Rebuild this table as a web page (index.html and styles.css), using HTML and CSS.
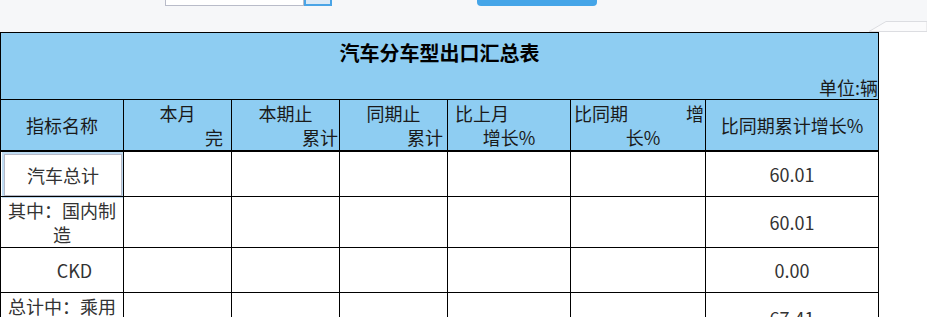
FILE: index.html
```html
<!DOCTYPE html>
<html lang="zh-CN">
<head>
    <meta charset="UTF-8">
    <meta name="viewport" content="width=device-width, initial-scale=1.0">
    <title>汽车分车型出口汇总表</title>
    <link rel="stylesheet" href="styles.css">
</head>
<body>
    <div class="toolbar">
        <div class="search">
            <span class="search-input"></span>
            <span class="search-btn"></span>
        </div>
        <span class="query-btn"></span>
        <svg class="tab-edge" width="58" height="12" viewBox="0 0 58 12">
            <path d="M0 11.5 L17 1.5 L58 1.5 L58 11.5 Z" fill="#fbfbfc" stroke="#dcdde1" stroke-width="1"/>
        </svg>
    </div>

    <table class="report">
        <colgroup>
            <col style="width:123px">
            <col style="width:108px">
            <col style="width:108px">
            <col style="width:108px">
            <col style="width:123px">
            <col style="width:135px">
            <col style="width:173px">
        </colgroup>
        <thead>
            <tr>
                <th colspan="7" class="title-cell">
                    <div class="title">汽车分车型出口汇总表</div>
                    <div class="unit">单位:辆</div>
                </th>
            </tr>
            <tr class="head-row">
                <th>指标名称</th>
                <th><span class="ln">本月</span><span class="ln right pr8">完</span></th>
                <th><span class="ln">本期止</span><span class="ln right">累计</span></th>
                <th><span class="ln">同期止</span><span class="ln right pr4">累计</span></th>
                <th><span class="ln left pl7">比上月</span><span class="ln">增长%</span></th>
                <th><span class="ln split"><span>比同期</span><span>增</span></span><span class="ln pl10">长%</span></th>
                <th>比同期累计增长%</th>
            </tr>
        </thead>
        <tbody>
            <tr>
                <td class="name"><div class="cell-edit">汽车总计</div></td>
                <td></td><td></td><td></td><td></td><td></td>
                <td>60.01</td>
            </tr>
            <tr>
                <td class="name">其中：国内制造</td>
                <td></td><td></td><td></td><td></td><td></td>
                <td>60.01</td>
            </tr>
            <tr>
                <td class="name indent">CKD</td>
                <td></td><td></td><td></td><td></td><td></td>
                <td>0.00</td>
            </tr>
            <tr>
                <td class="name">总计中：乘用车</td>
                <td></td><td></td><td></td><td></td><td></td>
                <td>67.41</td>
            </tr>
            <tr>
                <td class="name">其中：国内制造</td>
                <td></td><td></td><td></td><td></td><td></td>
                <td>67.41</td>
            </tr>
        </tbody>
    </table>
</body>
</html>
```

FILE: styles.css
```css
body {
    margin: 0;
    background-color: #ffffff;
    font-family: "Noto Sans CJK SC", "Noto Sans", sans-serif;
    color: #333;
}

/* query bar, scrolled partly out of view */
.toolbar {
    height: 32px;
    background-color: #f6f7f9;
    display: flex;
    align-items: flex-start;
    overflow: hidden;
}

.search {
    display: flex;
    margin-left: 165px;
    margin-top: -20px;
}

.search-input {
    width: 137px;
    height: 24px;
    background-color: #fff;
    border: 1px solid #b9bcc9;
}

.search-btn {
    width: 24px;
    height: 22px;
    background-color: #dbe9f6;
    border: 2px solid #4aa4e6;
}

.query-btn {
    width: 120px;
    height: 26px;
    margin-left: 145px;
    margin-top: -20px;
    background-color: #45a5e8;
    border-radius: 4px;
}

.tab-edge {
    margin-left: auto;
    align-self: flex-end;
}

.report {
    border-collapse: collapse;
    table-layout: fixed;
    width: 879px;
    font-size: 18px;
    line-height: 24px;
}

.report th,
.report td {
    border: 1px solid #000;
    padding: 0;
    text-align: center;
    vertical-align: middle;
}

.report thead th {
    background-color: #8ecdf2;
    font-weight: normal;
    color: #1a1a1a;
}

.title-cell {
    height: 66px;
}

.title {
    font-size: 20px;
    font-weight: bold;
    color: #000;
    padding-top: 8px;
    margin-bottom: 10px;
}

.unit {
    text-align: right;
}

.head-row th {
    height: 50px;
    border-bottom-width: 2px;
}

.ln {
    display: block;
}

.right {
    text-align: right;
    padding-right: 1px;
}

.left {
    text-align: left;
}

.pr8 { padding-right: 8px; }
.pr4 { padding-right: 4px; }
.pl7 { padding-left: 7px; }
.pl10 { padding-left: 10px; }

.split {
    display: flex;
    justify-content: space-between;
    padding: 0 1px 0 3px;
}

.report tbody td {
    height: 42px;
    padding: 1px 0;
    color: #333;
}

.report td.name {
    padding: 1px 7px;
}

.report td.indent {
    padding-left: 32px;
}

.report td.name .cell-edit {
    margin: 1px -6px -1px -4px;
    height: 40px;
    line-height: 40px;
    border: 1px solid #b6b9c6;
    box-shadow: 0 0 0 2px #bfdcf3;
    background-color: #fff;
}
```
